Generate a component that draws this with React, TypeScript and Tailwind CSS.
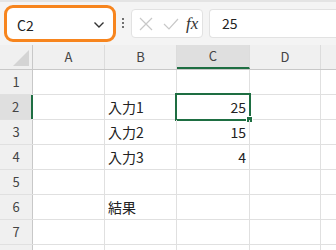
import React from "react";

const cols = ["A", "B", "C", "D"];
const widths = ["w-[72px]", "w-[72px]", "w-[73px]", "w-[71px]"];

type Cell = { text?: string; align?: "left" | "right" };
const data: Record<number, Record<string, Cell>> = {
  2: { B: { text: "入力1" }, C: { text: "25", align: "right" } },
  3: { B: { text: "入力2" }, C: { text: "15", align: "right" } },
  4: { B: { text: "入力3" }, C: { text: "4", align: "right" } },
  6: { B: { text: "結果" } },
};

export default function App() {
  const font = { fontFamily: '"Noto Sans CJK JP", "Noto Sans", sans-serif' };
  return (
    <div className="w-[336px] h-[250px] overflow-hidden bg-white text-[#222]" style={font}>
      {/* toolbar */}
      <div className="h-[45px] bg-[#f4f4f4] border-t-2 border-[#e4e4e4] flex items-start pt-[3px] pl-[4px]">
        <div className="w-[112px] h-[37px] border-[3px] border-[#f7851e] rounded-[9px] bg-white flex items-center pl-[10px] pr-[8px]">
          <span className="text-[14px] mt-[3px] flex-1">C2</span>
          <svg width="12" height="8" viewBox="0 0 12 8" className="mt-[2px]">
            <path d="M1.5 1.5 L6 6 L10.5 1.5" fill="none" stroke="#333" strokeWidth="1.4" />
          </svg>
        </div>
        <div className="w-[13px] h-[35px] flex flex-col items-center justify-center gap-[2px]">
          <span className="w-[2px] h-[2px] bg-[#444] rounded-full" />
          <span className="w-[2px] h-[2px] bg-[#444] rounded-full" />
          <span className="w-[2px] h-[2px] bg-[#444] rounded-full" />
        </div>
        <div className="ml-[2px] mt-[4px] w-[72px] h-[29px] bg-white border border-[#e2e2e2] rounded-[4px] flex items-center pl-[6px]">
          <svg width="16" height="16" viewBox="0 0 16 16">
            <path d="M2 2 L14 14 M14 2 L2 14" stroke="#c8c8c8" strokeWidth="1.2" fill="none" />
          </svg>
          <svg width="18" height="16" viewBox="0 0 18 16" className="ml-[8px]">
            <path d="M2 8 L7 13 L16 3" stroke="#c8c8c8" strokeWidth="1.2" fill="none" />
          </svg>
          <span
            className="ml-[6px] text-[17px] italic text-[#333]"
            style={{ fontFamily: '"Liberation Serif", serif' }}
          >
            fx
          </span>
        </div>
        <div className="ml-[6px] mt-[4px] flex-1 h-[29px] bg-white border border-[#e2e2e2] rounded-l-[4px] border-r-0 flex items-center pl-[12px]">
          <span className="text-[14px]">25</span>
        </div>
      </div>

      {/* header row */}
      <div className="flex h-[25px] bg-[#f0f0f0] border-b border-[#c8c8c8]">
        <div className="w-[33px] border-r border-[#c8c8c8] relative">
          <svg width="16" height="16" viewBox="0 0 16 16" className="absolute right-[3px] bottom-[3px]">
            <path d="M16 0 L16 16 L0 16 Z" fill="#d4d4d4" />
          </svg>
        </div>
        {cols.map((c, i) => (
          <div
            key={c}
            className={`${widths[i]} border-r border-[#dcdcdc] flex items-center justify-center text-[13px] text-[#444] ${
              c === "C" ? "bg-[#dfdfdf] border-b-2 border-b-[#1e6e42]" : ""
            }`}
          >
            {c}
          </div>
        ))}
        <div className="flex-1" />
      </div>

      {/* rows */}
      {[1, 2, 3, 4, 5, 6, 7, 8].map((r) => (
        <div key={r} className="flex h-[25px] border-b border-[#e0e0e0]">
          <div
            className={`w-[33px] flex items-center justify-center text-[13px] text-[#444] ${
              r === 2 ? "bg-[#dfdfdf] border-r-2 border-[#1e6e42]" : "bg-[#f0f0f0] border-r border-[#c8c8c8]"
            }`}
          >
            {r < 8 ? r : null}
          </div>
          {cols.map((c, i) => {
            const cell = data[r]?.[c];
            const selected = r === 2 && c === "C";
            return (
              <div
                key={c}
                className={`${widths[i]} border-r border-[#e0e0e0] flex items-center text-[14px] relative ${
                  cell?.align === "right" ? "justify-end pr-[3px]" : "pl-[3px]"
                }`}
              >
                {selected && (
                  <>
                    <div className="absolute left-[-2px] top-[-2px] right-[-2px] bottom-[-2px] border-2 border-[#1e6e42]" />
                    <div className="absolute right-[-4px] bottom-[-4px] w-[7px] h-[7px] bg-[#1e6e42] border border-white" />
                  </>
                )}
                {cell?.text}
              </div>
            );
          })}
          <div className="flex-1" />
        </div>
      ))}
    </div>
  );
}
